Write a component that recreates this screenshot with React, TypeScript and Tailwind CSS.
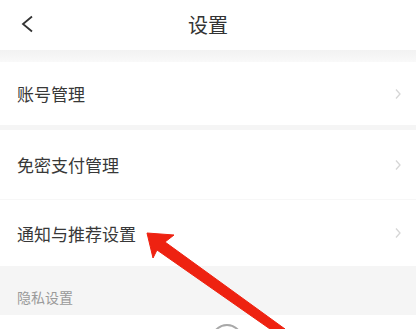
import * as React from "react";

const font = { fontFamily: '"Noto Sans CJK SC", "Noto Sans", sans-serif' };

function RowChevron() {
  return (
    <svg width="8" height="12" viewBox="0 0 8 12" className="shrink-0">
      <polyline points="2,1.5 6,6 2,10.5" fill="none" stroke="#d6d6d6" strokeWidth="1.3" />
    </svg>
  );
}

function Row({ label, className }: { label: string; className: string }) {
  return (
    <div className={`flex items-center justify-between bg-white pl-[17px] pr-[14px] ${className}`}>
      <span className="text-[17px] leading-none text-[#383838]">{label}</span>
      <RowChevron />
    </div>
  );
}

export default function App() {
  return (
    <div className="relative h-[329px] w-[416px] overflow-hidden bg-white" style={font}>
      <div className="relative flex h-[50px] items-center justify-center bg-white">
        <svg width="14" height="18" viewBox="0 0 14 18" className="absolute left-[20px] top-[15px]">
          <polyline points="12,1.5 3,9 12,16.5" fill="none" stroke="#333333" strokeWidth="1.8" />
        </svg>
        <span className="text-[20px] leading-none text-[#333333]">设置</span>
      </div>
      <div className="h-[12px] bg-gradient-to-b from-[#f2f2f2] to-[#f9f9f9]" />
      <Row label="账号管理" className="h-[63px]" />
      <div className="h-[5px] bg-[#f5f5f5]" />
      <Row label="免密支付管理" className="h-[70px] border-b border-[#f7f7f7]" />
      <Row label="通知与推荐设置" className="h-[66px]" />
      <div className="flex h-[49px] items-start bg-[#f5f5f5] pl-[17px] pt-[24px]">
        <span className="text-[14px] leading-none text-[#9a9a9a]">隐私设置</span>
      </div>
      <div className="bg-white pl-[211px] pt-[9px]">
        <div className="h-[32px] w-[32px] rounded-full border-2 border-[#a8a8a8]" />
      </div>
      <svg width="416" height="329" viewBox="0 0 416 329" className="pointer-events-none absolute left-0 top-0">
        <polygon
          points="147,233 174,235 165,242 285,329 270,329 157,250 153,258"
          fill="#ee2211"
          stroke="#ee2211"
          strokeWidth="1"
          strokeLinejoin="round"
        />
      </svg>
    </div>
  );
}
